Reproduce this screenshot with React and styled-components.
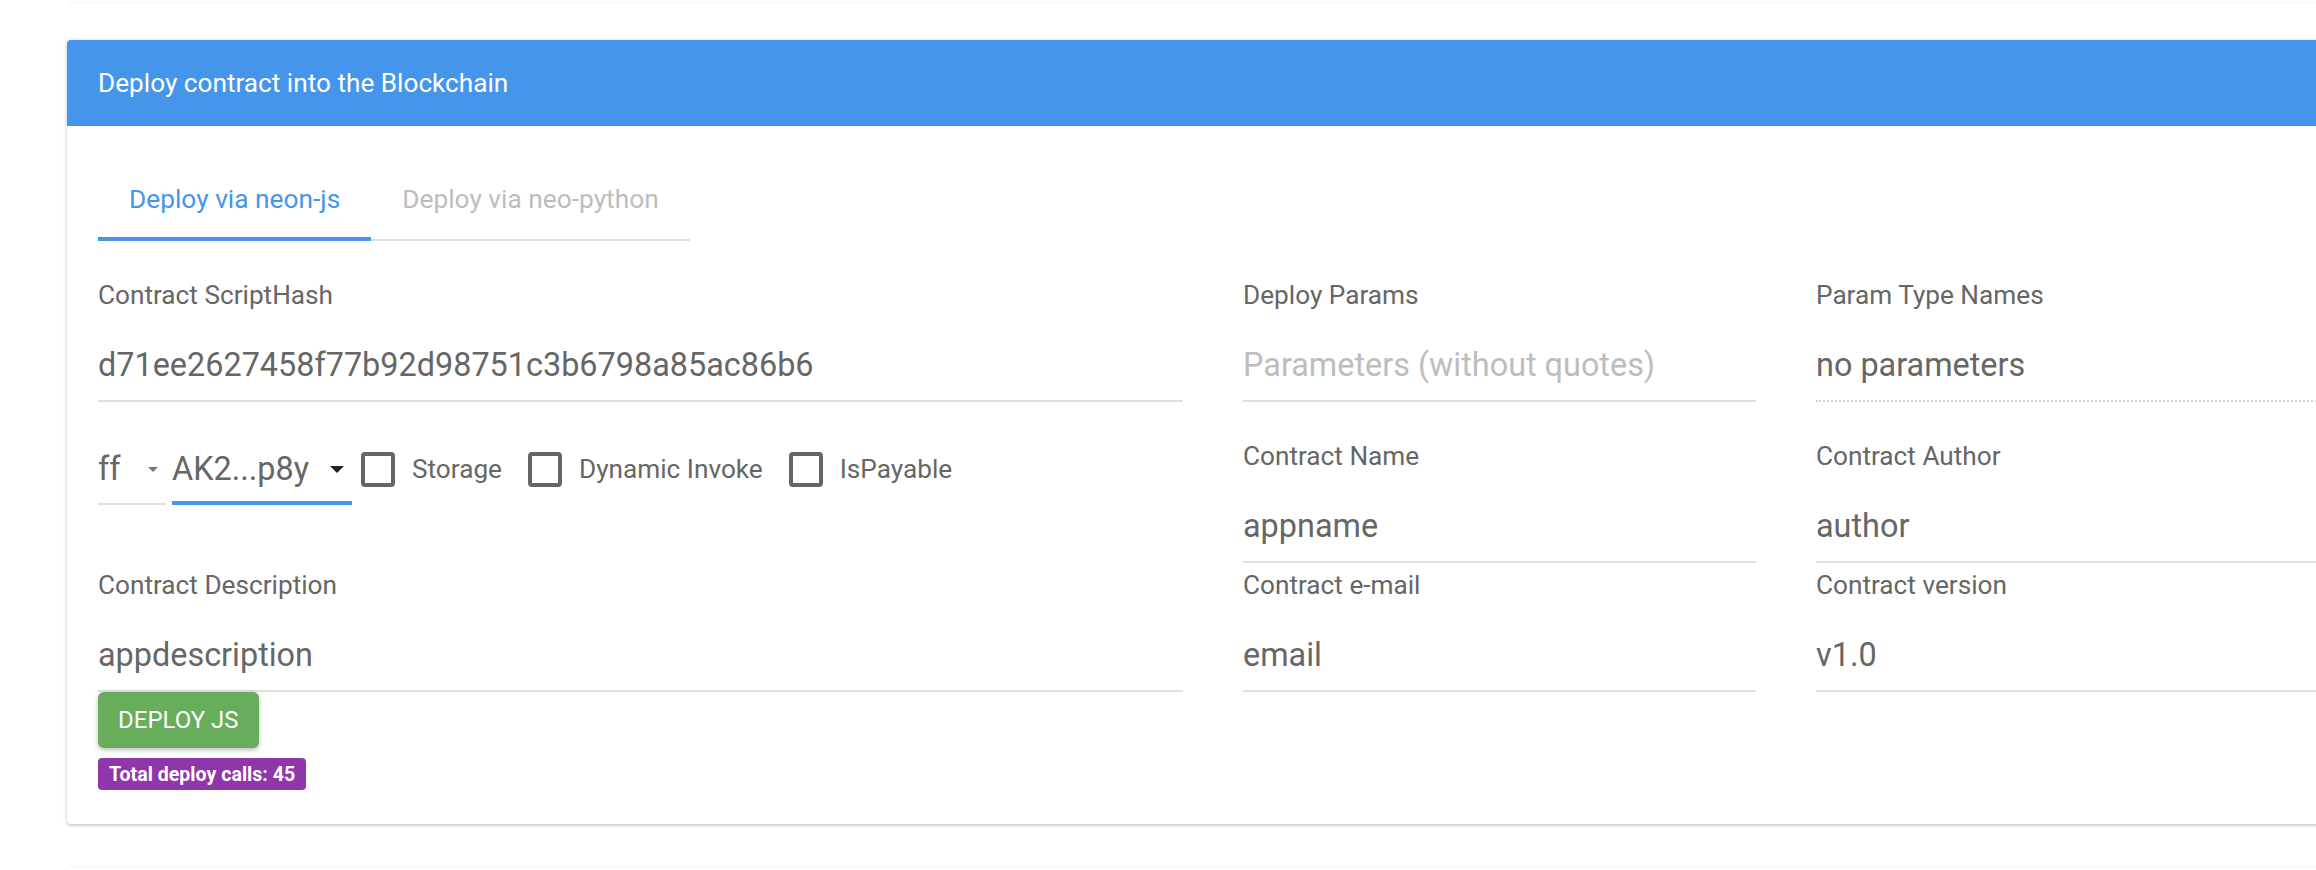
import React from 'react'
import styled, { createGlobalStyle } from 'styled-components'

const GlobalStyle = createGlobalStyle`
  html, body {
    margin: 0;
    padding: 0;
    background: #fff;
    overflow: hidden;
    font-family: Roboto, "Liberation Sans", sans-serif;
  }
`

const Page = styled.div`
  padding-left: 67px;
  width: 2400px;
`

const CardEdge = styled.div`
  height: 1px;
  background: #fff;
  box-shadow: 0 1px 4px rgba(0, 0, 0, 0.14);
`

const Card = styled.section`
  width: 2293px;
  margin-top: ${p => p.$top}px;
  background: #fff;
  border-radius: 4px;
  overflow: hidden;
  box-shadow: 0 1px 4px rgba(0, 0, 0, 0.22), 0 2px 2px rgba(0, 0, 0, 0.06);
`

const CardHeader = styled.header`
  height: 86px;
  display: flex;
  align-items: center;
  padding-left: 31px;
  background: #4596ea;
  color: #fff;
  font-size: 26.2px;
`

const CardBody = styled.div`
  padding: 31px 31px 34px;
`

const TabBar = styled.div`
  display: flex;
  width: fit-content;
  box-shadow: inset 0 -2px 0 #e0e0e0;
`

const Tab = styled.div`
  box-sizing: border-box;
  height: 84px;
  padding: 4px 31px 0;
  display: flex;
  align-items: center;
  font-size: 26.3px;
  color: ${p => (p.$active ? '#4596ea' : '#bdbdbd')};
  border-bottom: 4px solid ${p => (p.$active ? '#4596ea' : 'transparent')};
`

const Grid = styled.div`
  display: grid;
  grid-template-columns: 1085px 513px 513px;
  column-gap: 60px;
  margin-top: 40px;
`

const Field = styled.div`
  margin-top: ${p => p.$top || 0}px;
`

const Label = styled.div`
  font-size: 26.2px;
  line-height: 28px;
  color: #666;
`

const Value = styled.div`
  margin-top: 36px;
  padding-bottom: 15px;
  font-size: 32.4px;
  line-height: 40px;
  color: ${p => (p.$placeholder ? '#bdbdbd' : '#666')};
  border-bottom: 2px ${p => (p.$dotted ? 'dotted #d0d0d0' : 'solid #e0e0e0')};
  white-space: nowrap;
`

const OptionsRow = styled.div`
  display: flex;
  align-items: flex-start;
  margin-top: 47px;
`

const Select = styled.div`
  box-sizing: border-box;
  width: ${p => p.$width}px;
  height: 56px;
  padding: 0 8px ${p => (p.$focused ? 12 : 14)}px 0;
  margin-right: 6px;
  display: flex;
  align-items: center;
  justify-content: space-between;
  font-size: 32.4px;
  line-height: 40px;
  color: #666;
  border-bottom: ${p => (p.$focused ? '4px solid #4596ea' : '2px solid #e0e0e0')};
`

const Caret = styled.span`
  width: 0;
  height: 0;
  border-left: ${p => p.$size}px solid transparent;
  border-right: ${p => p.$size}px solid transparent;
  border-top: ${p => p.$size}px solid ${p => p.$color};
`

const CheckItem = styled.label`
  display: flex;
  align-items: center;
  height: 40px;
  margin-left: 3px;
  font-size: 26.2px;
  color: #666;

  & + & {
    margin-left: 26px;
  }
`

const Box = styled.span`
  box-sizing: border-box;
  width: 34px;
  height: 35px;
  margin-right: 17px;
  border: 4px solid #666;
  border-radius: 4px;
`

const Actions = styled.div`
  display: flex;
  flex-direction: column;
  align-items: flex-start;
`

const Button = styled.button`
  box-sizing: border-box;
  height: 56px;
  padding: 0 20px;
  border: 0;
  border-radius: 6px;
  background: #67ad5b;
  color: #fff;
  font-family: inherit;
  font-size: 24px;
  text-transform: uppercase;
  box-shadow: 0 2px 5px rgba(0, 0, 0, 0.26);
`

const Badge = styled.span`
  margin-top: 10px;
  height: 32px;
  padding: 0 11px;
  display: flex;
  align-items: center;
  border-radius: 4px;
  background: #8f36aa;
  color: #fff;
  font-size: 19.6px;
  font-weight: 700;
`

const NextCard = styled.div`
  width: 2293px;
  height: 60px;
  margin-top: 44px;
  background: #fff;
  border-radius: 4px;
  box-shadow: 0 1px 4px rgba(0, 0, 0, 0.14);
`

const TextField = ({ label, value, top, placeholder, dotted }) => (
  <Field $top={top}>
    <Label>{label}</Label>
    <Value $placeholder={placeholder} $dotted={dotted}>{value}</Value>
  </Field>
)

const checks = ['Storage', 'Dynamic Invoke', 'IsPayable']

const App = () => (
  <Page>
    <GlobalStyle />
    <CardEdge />
    <Card $top={39}>
      <CardHeader>Deploy contract into the Blockchain</CardHeader>
      <CardBody>
        <TabBar>
          <Tab $active>Deploy via neon-js</Tab>
          <Tab>Deploy via neo-python</Tab>
        </TabBar>

        <Grid>
          <TextField label="Contract ScriptHash" value="d71ee2627458f77b92d98751c3b6798a85ac86b6" />
          <TextField label="Deploy Params" value="Parameters (without quotes)" placeholder />
          <TextField label="Param Type Names" value="no parameters" dotted />

          <OptionsRow>
            <Select $width={68}>
              ff
              <Caret $size={5} $color="#757575" />
            </Select>
            <Select $width={180} $focused>
              AK2...p8y
              <Caret $size={7} $color="#222" />
            </Select>
            {checks.map(c => (
              <CheckItem key={c}>
                <Box />
                {c}
              </CheckItem>
            ))}
          </OptionsRow>
          <TextField top={40} label="Contract Name" value="appname" />
          <TextField top={40} label="Contract Author" value="author" />

          <TextField top={8} label="Contract Description" value="appdescription" />
          <TextField top={8} label="Contract e-mail" value="email" />
          <TextField top={8} label="Contract version" value="v1.0" />
        </Grid>

        <Actions>
          <Button>Deploy JS</Button>
          <Badge>Total deploy calls: 45</Badge>
        </Actions>
      </CardBody>
    </Card>
    <NextCard />
  </Page>
)

export default App
